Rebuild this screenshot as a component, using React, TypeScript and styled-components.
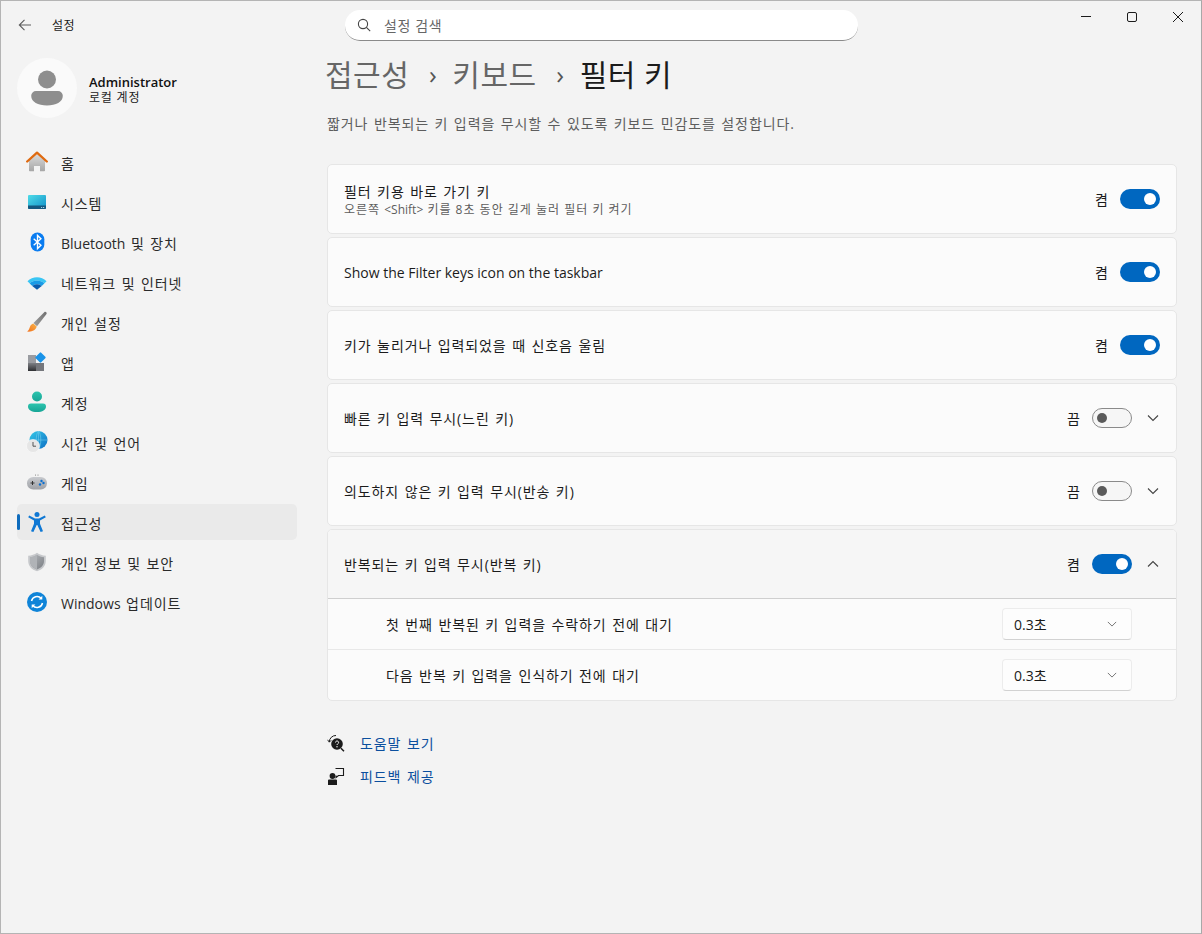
import React from 'react';
import styled, { createGlobalStyle } from 'styled-components';

const GlobalStyle = createGlobalStyle`
	html, body {
		margin: 0;
		padding: 0;
		background: #f3f3f3;
	}
	* {
		box-sizing: border-box;
	}
	body {
		font-family: 'Open Sans', 'Noto Sans CJK KR', sans-serif;
		font-size: 14px;
		color: #1b1b1b;
	}
`;

function BackIcon() {
	return (
		<svg width="16" height="16" viewBox="0 0 16 16" fill="none" stroke="#5c5c5c" strokeWidth="1.1">
			<path d="M14 8H2.5M7.5 2.8L2.3 8l5.2 5.2" />
		</svg>
	);
}

function SearchIcon() {
	return (
		<svg width="14" height="14" viewBox="0 0 14 14" fill="none" stroke="#444" strokeWidth="1.1">
			<circle cx="6" cy="6" r="4.6" />
			<path d="M9.4 9.4l3.8 3.8" />
		</svg>
	);
}

function MinimizeIcon() {
	return (
		<svg width="12" height="12" viewBox="0 0 12 12" stroke="#1b1b1b" strokeWidth="1">
			<path d="M1 5.5h10" />
		</svg>
	);
}

function MaximizeIcon() {
	return (
		<svg width="12" height="12" viewBox="0 0 12 12" fill="none" stroke="#1b1b1b" strokeWidth="1">
			<rect x="1.5" y="1.5" width="9" height="9" rx="1.5" />
		</svg>
	);
}

function CloseIcon() {
	return (
		<svg width="12" height="12" viewBox="0 0 12 12" stroke="#1b1b1b" strokeWidth="1">
			<path d="M1 1l10 10M11 1L1 11" />
		</svg>
	);
}

function Chevron({ up, small }: { up?: boolean; small?: boolean }) {
	const size = small ? 10 : 12;
	return (
		<svg width={size} height={size} viewBox="0 0 12 12" fill="none" stroke={small ? '#777' : '#444'} strokeWidth={small ? 1.2 : 1.1}>
			<path d={up ? 'M1 8.5l5-5 5 5' : 'M1 3.5l5 5 5-5'} />
		</svg>
	);
}

function HomeIcon() {
	return (
		<svg width="22" height="22" viewBox="0 0 22 22">
			<defs>
				<linearGradient id="homeBody" x1="0" y1="0" x2="0" y2="1">
					<stop offset="0" stopColor="#dedede" />
					<stop offset="1" stopColor="#a6a6a6" />
				</linearGradient>
			</defs>
			<path d="M3 9l8-7 8 7v10.500a.8.8 0 0 1-.8.8H14V15H8v5.300H3.800a.8.8 0 0 1-.8-.8z" fill="url(#homeBody)" />
			<path d="M1.200 10.500L11 1.600l9.800 8.900" fill="none" stroke="#df6a10" strokeWidth="2.300" strokeLinejoin="round" strokeLinecap="round" />
		</svg>
	);
}

function SystemIcon() {
	return (
		<svg width="20" height="16" viewBox="0 0 20 16">
			<defs>
				<linearGradient id="systemScreen" x1="0" y1="0" x2="1" y2="1">
					<stop offset="0" stopColor="#4fdce8" />
					<stop offset="1" stopColor="#0f8fc8" />
				</linearGradient>
			</defs>
			<rect x="1" y="1" width="18" height="14" rx="1" fill="url(#systemScreen)" />
			<path d="M1 11.500h18V14a1 1 0 0 1-1 1H2a1 1 0 0 1-1-1z" fill="#14587f" />
			<rect x="14" y="13" width="1.200" height="1" fill="#9fd0e6" />
			<rect x="16" y="13" width="1.200" height="1" fill="#9fd0e6" />
		</svg>
	);
}

function BluetoothIcon() {
	return (
		<svg width="15" height="20" viewBox="0 0 16 22">
			<rect x="0.500" y="0.500" width="15" height="21" rx="7.500" fill="#0a7cf0" />
			<path d="M3.800 7.300l8 7.200-3.800 3.700V3.800l3.800 3.700-8 7.200" fill="none" stroke="#fff" strokeWidth="1.500" />
		</svg>
	);
}

function WifiIcon() {
	return (
		<svg width="20" height="15" viewBox="0 0 22 16">
			<path d="M0.500 6.500C6 0.700 16 0.700 21.500 6.500L19 9C14.500 4.800 7.500 4.800 3 9z" fill="#39c5f3" />
			<path d="M3 9C7.500 4.800 14.500 4.800 19 9l-2.800 2.800c-3-2.600-7.400-2.600-10.400 0z" fill="#1a9be6" />
			<path d="M5.800 11.800c3-2.600 7.400-2.600 10.400 0L11 16z" fill="#0b5cad" />
		</svg>
	);
}

function BrushIcon() {
	return (
		<svg width="22" height="22" viewBox="0 0 22 22">
			<defs>
				<linearGradient id="brushHandle" x1="0" y1="1" x2="1" y2="0">
					<stop offset="0" stopColor="#a0a0a0" />
					<stop offset="1" stopColor="#6f6f6f" />
				</linearGradient>
				<linearGradient id="brushHair" x1="0" y1="1" x2="1" y2="0">
					<stop offset="0" stopColor="#f2701c" />
					<stop offset="1" stopColor="#f8b54a" />
				</linearGradient>
			</defs>
			<path d="M7.500 12L18.500 1c1-.8 2.800.6 2 2L11 15.200z" fill="url(#brushHandle)" />
			<path d="M7.300 12.500l3.400 3c-.6 3.500-4.900 5.700-9.700 5 2.200-1.200 2.200-3 3-4.800.6-1.500 1.800-2.900 3.300-3.200z" fill="url(#brushHair)" />
		</svg>
	);
}

function AppsIcon() {
	return (
		<svg width="20" height="20" viewBox="0 0 20 20">
			<defs>
				<linearGradient id="appsDark" x1="0" y1="0" x2="0" y2="1">
					<stop offset="0" stopColor="#7d7f84" />
					<stop offset="1" stopColor="#2f3033" />
				</linearGradient>
			</defs>
			<rect x="1" y="3" width="8" height="8" fill="#9a9ca1" />
			<rect x="1" y="11" width="8" height="8" fill="url(#appsDark)" />
			<rect x="9" y="11" width="8" height="8" fill="#75777c" />
			<rect x="9.600" y="1.600" width="7.800" height="7.800" rx="1" transform="rotate(45 13.500 5.500)" fill="#1a93e8" />
		</svg>
	);
}

function AccountIcon() {
	return (
		<svg width="18" height="22" viewBox="0 0 18 22">
			<defs>
				<linearGradient id="accountFill" x1="0" y1="0" x2="0" y2="1">
					<stop offset="0" stopColor="#2cc4ae" />
					<stop offset="1" stopColor="#17a596" />
				</linearGradient>
			</defs>
			<circle cx="9" cy="5.500" r="5" fill="url(#accountFill)" />
			<path d="M3 12.500h12a3 3 0 0 1 3 3c0 3.500-3.500 5.500-9 5.500s-9-2-9-5.500a3 3 0 0 1 3-3z" fill="url(#accountFill)" />
		</svg>
	);
}

function TimeIcon() {
	return (
		<svg width="22" height="22" viewBox="0 0 22 22">
			<defs>
				<linearGradient id="globeFill" x1="0" y1="0" x2="1" y2="1">
					<stop offset="0" stopColor="#35c8e8" />
					<stop offset="1" stopColor="#0d6fc4" />
				</linearGradient>
			</defs>
			<circle cx="12.500" cy="9" r="9" fill="url(#globeFill)" />
			<path d="M12.500 0v18M3.500 9h18M12.500 0c-3 2.500-3 15.500 0 18M12.500 0c3 2.500 3 15.500 0 18" fill="none" stroke="#7fd3ee" strokeWidth="0.500" />
			<circle cx="7" cy="15" r="6.500" fill="#e6e6e6" stroke="#fafafa" strokeWidth="0.600" />
			<path d="M7 11v4.200h3" fill="none" stroke="#555" strokeWidth="1" />
		</svg>
	);
}

function GameIcon() {
	return (
		<svg width="22" height="16" viewBox="0 0 22 16">
			<defs>
				<linearGradient id="padFill" x1="0" y1="0" x2="0" y2="1">
					<stop offset="0" stopColor="#c8cace" />
					<stop offset="1" stopColor="#9fa1a6" />
				</linearGradient>
			</defs>
			<rect x="1" y="3" width="20" height="12.500" rx="6.200" fill="url(#padFill)" />
			<path d="M4.500 9h4M6.500 7v4" stroke="#333" strokeWidth="1" />
			<circle cx="15.500" cy="7" r="1.200" fill="#0a6fd0" />
			<circle cx="17.500" cy="9" r="1.200" fill="#0a6fd0" />
			<circle cx="14" cy="10.500" r="1.200" fill="#0a6fd0" />
			<circle cx="9.500" cy="1" r="0.500" fill="#666" />
			<circle cx="12" cy="1" r="0.500" fill="#666" />
		</svg>
	);
}

function AccessibilityIcon() {
	return (
		<svg width="18" height="20" viewBox="0 0 18 20" fill="#0f78d4">
			<circle cx="9" cy="2.500" r="2.500" />
			<path d="M1.200 3.500L7 6.600h4l5.800-3.100 1 1.800L12 8.600v3.200l3 7.400-2.400.8L9.300 13h-.6l-3.300 7-2.400-.8L6 11.800V8.600L.2 5.300z" />
		</svg>
	);
}

function ShieldIcon() {
	return (
		<svg width="20" height="20" viewBox="0 0 20 20">
			<defs>
				<linearGradient id="shieldInner" x1="0" y1="0" x2="1" y2="1">
					<stop offset="0" stopColor="#b4b7bb" />
					<stop offset="1" stopColor="#7a7e83" />
				</linearGradient>
			</defs>
			<path d="M10 .8c2.500 1.800 5.400 2.800 8.800 2.900V9c0 5-3.600 8.700-8.800 10.300C4.800 17.700 1.200 14 1.200 9V3.700C4.600 3.600 7.500 2.600 10 .8z" fill="#c6c8cb" />
			<path d="M10 2.800c2.100 1.400 4.400 2.200 7 2.400V9c0 4-2.800 7-7 8.400C5.800 16 3 13 3 9V5.200c2.600-.2 4.900-1 7-2.400z" fill="url(#shieldInner)" />
			<path d="M10 2.800V17.400C5.800 16 3 13 3 9V5.200c2.600-.2 4.900-1 7-2.400z" fill="#b0b3b7" />
		</svg>
	);
}

function UpdateIcon() {
	return (
		<svg width="20" height="20" viewBox="0 0 20 20">
			<circle cx="10" cy="10" r="10" fill="#0f84d8" />
			<path d="M4.500 9a5.600 5.600 0 0 1 9.800-2.500M15.500 11a5.600 5.600 0 0 1-9.800 2.500" fill="none" stroke="#fff" strokeWidth="1.500" />
			<path d="M15.300 3.800v3.700h-3.700zM4.700 16.200v-3.700h3.700z" fill="#fff" />
		</svg>
	);
}

function HelpIcon() {
	return (
		<svg width="18" height="18" viewBox="0 0 18 18">
			<path d="M2.300 8a6.500 6.500 0 0 1 6.700-6.500" fill="none" stroke="#1b1b1b" strokeWidth="1" />
			<path d="M0.600 5.800l1.700 2.400 2-2" fill="none" stroke="#1b1b1b" strokeWidth="0.900" />
			<circle cx="10" cy="10" r="5.800" fill="#1b1b1b" />
			<path d="M14 14.300l3 3" stroke="#1b1b1b" strokeWidth="1.500" />
			<path d="M8.500 8.500c0-2 3.100-2 3.100 0 0 1.200-1.500 1.200-1.500 2.500" fill="none" stroke="#fff" strokeWidth="1" />
			<circle cx="10" cy="12.700" r="0.700" fill="#fff" />
		</svg>
	);
}

function FeedbackIcon() {
	return (
		<svg width="18" height="18" viewBox="0 0 18 18">
			<path d="M8.500 1.500h8v7H11.500L9 10.500v-2" fill="none" stroke="#1b1b1b" strokeWidth="1.100" />
			<circle cx="5.500" cy="9" r="2.900" fill="#1b1b1b" />
			<path d="M2 12.500h7a1 1 0 0 1 1 1V18H1v-4.500a1 1 0 0 1 1-1z" fill="#1b1b1b" />
		</svg>
	);
}

const navItems = [
	{ key: 'home', label: '홈', icon: <HomeIcon /> },
	{ key: 'system', label: '시스템', icon: <SystemIcon /> },
	{ key: 'bluetooth', label: <><Latin>Bluetooth</Latin> 및 장치</>, icon: <BluetoothIcon /> },
	{ key: 'network', label: '네트워크 및 인터넷', icon: <WifiIcon /> },
	{ key: 'personal', label: '개인 설정', icon: <BrushIcon /> },
	{ key: 'apps', label: '앱', icon: <AppsIcon /> },
	{ key: 'account', label: '계정', icon: <AccountIcon /> },
	{ key: 'time', label: '시간 및 언어', icon: <TimeIcon /> },
	{ key: 'game', label: '게임', icon: <GameIcon /> },
	{ key: 'access', label: '접근성', icon: <AccessibilityIcon />, active: true },
	{ key: 'privacy', label: '개인 정보 및 보안', icon: <ShieldIcon /> },
	{ key: 'update', label: <><Latin>Windows</Latin> 업데이트</>, icon: <UpdateIcon /> },
];

const settings = [
	{
		key: 'shortcut',
		title: '필터 키용 바로 가기 키',
		sub: <>오른쪽 <Latin>&lt;Shift&gt;</Latin> 키를 8초 동안 길게 눌러 필터 키 켜기</>,
		on: true,
	},
	{ key: 'taskbar', title: <Latin>Show the Filter keys icon on the taskbar</Latin>, on: true },
	{ key: 'beep', title: '키가 눌리거나 입력되었을 때 신호음 울림', on: true },
	{ key: 'slow', title: '빠른 키 입력 무시(느린 키)', on: false, chevron: true },
	{ key: 'bounce', title: '의도하지 않은 키 입력 무시(반송 키)', on: false, chevron: true },
];

export default function App() {
	return (
		<Window>
			<GlobalStyle />
			<TitleBar>
				<BackArea>
					<BackIcon />
					<AppTitle>설정</AppTitle>
				</BackArea>
				<SearchBox>
					<SearchIcon />
					<SearchText>설정 검색</SearchText>
				</SearchBox>
				<WindowControls>
					<ControlButton><MinimizeIcon /></ControlButton>
					<ControlButton><MaximizeIcon /></ControlButton>
					<ControlButton><CloseIcon /></ControlButton>
				</WindowControls>
			</TitleBar>
			<Body>
				<Sidebar>
					<Profile>
						<Avatar>
							<svg width="32" height="36" viewBox="0 0 32 36" fill="#8e8e8e">
								<circle cx="16" cy="9.500" r="9" />
								<path d="M5 21h22a4.800 4.800 0 0 1 4.800 4.800C31.800 32 25 35.500 16 35.500S.2 32 .2 25.800A4.800 4.800 0 0 1 5 21z" />
							</svg>
						</Avatar>
						<ProfileText>
							<ProfileName>Administrator</ProfileName>
							<ProfileSub>로컬 계정</ProfileSub>
						</ProfileText>
					</Profile>
					<Nav>
						{navItems.map((item) => (
							<NavItem key={item.key} $active={item.active}>
								<NavIcon>{item.icon}</NavIcon>
								<NavLabel>{item.label}</NavLabel>
							</NavItem>
						))}
					</Nav>
				</Sidebar>
				<Content>
					<Breadcrumb>
						<Crumb>접근성</Crumb>
						<CrumbSep>›</CrumbSep>
						<Crumb>키보드</Crumb>
						<CrumbSep>›</CrumbSep>
						<Crumb $current>필터 키</Crumb>
					</Breadcrumb>
					<Description>짧거나 반복되는 키 입력을 무시할 수 있도록 키보드 민감도를 설정합니다.</Description>
					<CardList>
						{settings.map((s) => (
							<Card key={s.key}>
								<CardText>
									<CardTitle>{s.title}</CardTitle>
									{s.sub && <CardSub>{s.sub}</CardSub>}
								</CardText>
								<ToggleLabel>{s.on ? '켬' : '끔'}</ToggleLabel>
								<Toggle $on={s.on} />
								{s.chevron && (
									<ChevronSlot><Chevron /></ChevronSlot>
								)}
							</Card>
						))}
						<Expander>
							<ExpanderHead>
								<CardText>
									<CardTitle>반복되는 키 입력 무시(반복 키)</CardTitle>
								</CardText>
								<ToggleLabel>켬</ToggleLabel>
								<Toggle $on />
								<ChevronSlot><Chevron up /></ChevronSlot>
							</ExpanderHead>
							<SubRow>
								<SubLabel>첫 번째 반복된 키 입력을 수락하기 전에 대기</SubLabel>
								<Select>
									0.3초
									<Chevron small />
								</Select>
							</SubRow>
							<SubRow>
								<SubLabel>다음 반복 키 입력을 인식하기 전에 대기</SubLabel>
								<Select>
									0.3초
									<Chevron small />
								</Select>
							</SubRow>
						</Expander>
					</CardList>
					<Links>
						<LinkRow>
							<HelpIcon />
							<LinkText>도움말 보기</LinkText>
						</LinkRow>
						<LinkRow>
							<FeedbackIcon />
							<LinkText>피드백 제공</LinkText>
						</LinkRow>
					</Links>
				</Content>
			</Body>
		</Window>
	);
}

// hangul runs a bit wider in the original font than in Noto
const hangulSpacing = `
	letter-spacing: 0.9px;
	word-spacing: 1px;
`;

function Latin({ children }: { children: React.ReactNode }) {
	return <LatinRun>{children}</LatinRun>;
}

const LatinRun = styled.span`
	letter-spacing: 0;
	word-spacing: 0;
`;

const Window = styled.div`
	width: 1202px;
	height: 934px;
	display: flex;
	flex-direction: column;
	background: #f3f3f3;
	border: 1px solid #b4b4b4;
	border-right-color: #a8a8a8;
	overflow: hidden;
`;

const TitleBar = styled.header`
	height: 49px;
	display: flex;
	align-items: flex-start;
	flex-shrink: 0;
`;

const BackArea = styled.div`
	width: 344px;
	height: 48px;
	display: flex;
	align-items: center;
	padding-left: 16px;
`;

const AppTitle = styled.span`
	margin-left: 19px;
	padding-top: 2px;
	font-size: 12px;
	line-height: 16px;
	letter-spacing: 0.5px;
`;

const SearchBox = styled.div`
	width: 513px;
	height: 31px;
	margin-top: 9px;
	display: flex;
	align-items: center;
	gap: 13px;
	padding-left: 12px;
	background: #fff;
	border-radius: 15px;
	border-bottom: 1px solid #8a8a8a;
`;

const SearchText = styled.span`
	font-size: 14px;
	color: #666;
	letter-spacing: 0.6px;
`;

const WindowControls = styled.div`
	display: flex;
	margin-left: auto;
`;

const ControlButton = styled.div`
	width: 46px;
	height: 32px;
	display: flex;
	align-items: center;
	justify-content: center;
`;

const Body = styled.div`
	flex: 1;
	display: flex;
	min-height: 0;
`;

const Sidebar = styled.aside`
	width: 326px;
	flex-shrink: 0;
	padding-left: 16px;
`;

const Profile = styled.div`
	display: flex;
	align-items: center;
	gap: 12px;
	height: 60px;
	margin-top: 8px;
`;

const Avatar = styled.div`
	width: 60px;
	height: 60px;
	border-radius: 50%;
	background: #fafafa;
	display: flex;
	align-items: center;
	justify-content: center;
`;

const ProfileText = styled.div`
	display: flex;
	flex-direction: column;
	padding-top: 4px;
`;

const ProfileName = styled.div`
	font-size: 13px;
	line-height: 16px;
	font-weight: 600;
	color: #111;
`;

const ProfileSub = styled.div`
	font-size: 12px;
	line-height: 16px;
	letter-spacing: 0.8px;
	color: #222;
`;

const Nav = styled.nav`
	display: flex;
	flex-direction: column;
	gap: 4px;
	margin-top: 26px;
`;

const NavItem = styled.div<{ $active?: boolean }>`
	position: relative;
	width: 280px;
	height: 36px;
	display: flex;
	align-items: center;
	border-radius: 5px;
	font-size: 14px;
	color: #2a2a2a;
	background: ${({ $active }) => ($active ? '#eaeaea' : 'transparent')};

	${({ $active }) =>
		$active &&
		`
		&::before {
			content: '';
			position: absolute;
			left: 0;
			top: 10px;
			width: 3px;
			height: 16px;
			border-radius: 2px;
			background: #0f6cbd;
		}
	`}
`;

const NavIcon = styled.span`
	width: 44px;
	padding-left: 9px;
	padding-right: 13px;
	display: flex;
	align-items: center;
	justify-content: center;
	flex-shrink: 0;
`;

const NavLabel = styled.span`
	padding-top: 2px;
	${hangulSpacing}
`;

const Content = styled.main`
	flex: 1;
	padding-right: 24px;
	display: flex;
	flex-direction: column;
`;

const Breadcrumb = styled.div`
	display: flex;
	align-items: center;
	height: 48px;
	margin-left: -2px;
`;

const Crumb = styled.span<{ $current?: boolean }>`
	font-size: 30px;
	line-height: 47px;
	letter-spacing: 0.5px;
	color: ${({ $current }) => ($current ? '#1b1b1b' : '#666')};
`;

const CrumbSep = styled.span`
	font-size: 26px;
	line-height: 47px;
	width: 43px;
	padding-left: 4px;
	text-align: center;
	color: #555;
`;

const Description = styled.p`
	margin: 16px 0 0;
	font-size: 14px;
	line-height: 20px;
	${hangulSpacing}
	color: #5d5d5d;
`;

const CardList = styled.div`
	display: flex;
	flex-direction: column;
	gap: 3px;
	margin-top: 30px;
`;

const Card = styled.div`
	height: 70px;
	display: flex;
	align-items: center;
	padding: 0 16px;
	background: #fbfbfb;
	border: 1px solid #e6e6e6;
	border-radius: 5px;
`;

const CardText = styled.div`
	flex: 1;
	display: flex;
	flex-direction: column;
	padding-top: 2px;
`;

const CardTitle = styled.div`
	font-size: 14px;
	line-height: 18px;
	${hangulSpacing}
	color: #1b1b1b;
`;

const CardSub = styled.div`
	font-size: 12px;
	line-height: 16px;
	margin-top: 1px;
	letter-spacing: 1px;
	color: #5d5d5d;
`;

const ToggleLabel = styled.span`
	font-size: 14px;
	margin-right: 12px;
	color: #1b1b1b;
`;

const Toggle = styled.span<{ $on?: boolean }>`
	position: relative;
	width: 40px;
	height: 20px;
	border-radius: 10px;
	flex-shrink: 0;
	background: ${({ $on }) => ($on ? '#0067c0' : '#f6f6f6')};
	border: ${({ $on }) => ($on ? 'none' : '1px solid #8a8a8a')};

	&::after {
		content: '';
		position: absolute;
		top: 50%;
		width: ${({ $on }) => ($on ? 12 : 10)}px;
		height: ${({ $on }) => ($on ? 12 : 10)}px;
		margin-top: ${({ $on }) => ($on ? -6 : -5)}px;
		border-radius: 50%;
		background: ${({ $on }) => ($on ? '#fff' : '#5a5a5a')};
		${({ $on }) => ($on ? 'right: 4px;' : 'left: 4px;')}
	}
`;

const ChevronSlot = styled.span`
	width: 28px;
	padding-right: 1px;
	display: flex;
	justify-content: flex-end;
	flex-shrink: 0;
`;

const Expander = styled.div`
	background: #fbfbfb;
	border: 1px solid #e6e6e6;
	border-radius: 5px;
	overflow: hidden;
`;

const ExpanderHead = styled.div`
	height: 69px;
	display: flex;
	align-items: center;
	padding: 0 16px;
	background: #f6f6f6;
	border-bottom: 1px solid #cfcfcf;
`;

const SubRow = styled.div`
	height: 50px;
	display: flex;
	align-items: center;
	justify-content: space-between;
	padding: 0 44px 0 58px;

	& + & {
		height: 51px;
		border-top: 1px solid #e8e8e8;
	}
`;

const SubLabel = styled.span`
	font-size: 14px;
	${hangulSpacing}
	color: #1b1b1b;
`;

const Select = styled.div`
	width: 130px;
	height: 32px;
	display: flex;
	align-items: center;
	justify-content: space-between;
	padding: 0 14px 0 11px;
	background: #fdfdfd;
	border: 1px solid #ececec;
	border-bottom-color: #d2d2d2;
	border-radius: 4px;
	font-size: 14px;
	color: #1b1b1b;
`;

const Links = styled.div`
	display: flex;
	flex-direction: column;
	gap: 13px;
	margin-top: 32px;
`;

const LinkRow = styled.div`
	height: 20px;
	display: flex;
	align-items: center;
	gap: 15px;
`;

const LinkText = styled.span`
	font-size: 14px;
	${hangulSpacing}
	color: #0b4f9e;
`;
